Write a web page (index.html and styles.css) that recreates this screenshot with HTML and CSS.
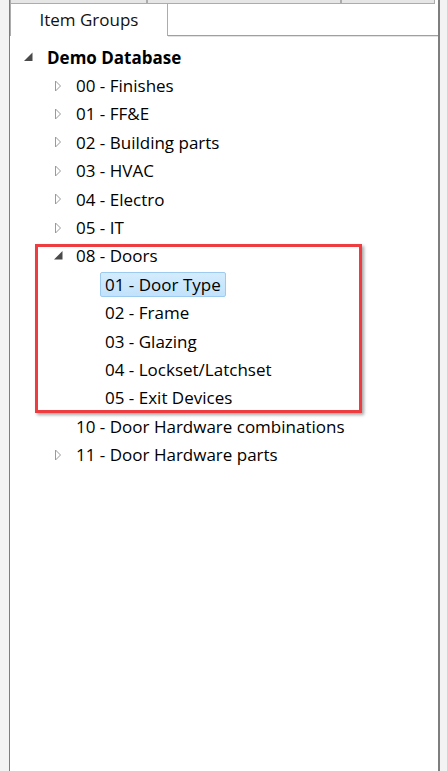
FILE: index.html
```html
<!DOCTYPE html>
<html>
<head>
<meta charset="utf-8">
<link rel="stylesheet" href="styles.css">
</head>
<body>
<div class="window">
  <div class="pane">
    <div class="back-tabs">
      <div class="back-tab t1"></div>
      <div class="back-tab t2"></div>
      <div class="back-tab t3"></div>
    </div>
    <div class="tab-row">
      <div class="tab active">Item Groups</div>
      <div class="tab-fill"></div>
    </div>
    <div class="tree">
      <div class="row l0"><span class="tog"><svg viewBox="0 0 12 12" width="12" height="12"><polygon class="exp" points="10.5,1.5 10.5,10 2,10"/></svg></span><span class="label bold">Demo Database</span></div>
      <div class="row l1"><span class="tog"><svg viewBox="0 0 12 12" width="12" height="12"><polygon class="col" points="4.5,1 9.5,6 4.5,11"/></svg></span><span class="label">00 - Finishes</span></div>
      <div class="row l1"><span class="tog"><svg viewBox="0 0 12 12" width="12" height="12"><polygon class="col" points="4.5,1 9.5,6 4.5,11"/></svg></span><span class="label">01 - FF&amp;E</span></div>
      <div class="row l1"><span class="tog"><svg viewBox="0 0 12 12" width="12" height="12"><polygon class="col" points="4.5,1 9.5,6 4.5,11"/></svg></span><span class="label">02 - Building parts</span></div>
      <div class="row l1"><span class="tog"><svg viewBox="0 0 12 12" width="12" height="12"><polygon class="col" points="4.5,1 9.5,6 4.5,11"/></svg></span><span class="label">03 - HVAC</span></div>
      <div class="row l1"><span class="tog"><svg viewBox="0 0 12 12" width="12" height="12"><polygon class="col" points="4.5,1 9.5,6 4.5,11"/></svg></span><span class="label">04 - Electro</span></div>
      <div class="row l1"><span class="tog"><svg viewBox="0 0 12 12" width="12" height="12"><polygon class="col" points="4.5,1 9.5,6 4.5,11"/></svg></span><span class="label">05 - IT</span></div>
      <div class="row l1"><span class="tog"><svg viewBox="0 0 12 12" width="12" height="12"><polygon class="exp" points="11.5,1 11.5,9.5 3,9.5"/></svg></span><span class="label">08 - Doors</span></div>
      <div class="row l2"><span class="tog"></span><span class="label selected">01 - Door Type</span></div>
      <div class="row l2"><span class="tog"></span><span class="label">02 - Frame</span></div>
      <div class="row l2"><span class="tog"></span><span class="label">03 - Glazing</span></div>
      <div class="row l2"><span class="tog"></span><span class="label">04 - Lockset/Latchset</span></div>
      <div class="row l2"><span class="tog"></span><span class="label">05 - Exit Devices</span></div>
      <div class="row l1"><span class="tog"></span><span class="label">10 - Door Hardware combinations</span></div>
      <div class="row l1"><span class="tog"><svg viewBox="0 0 12 12" width="12" height="12"><polygon class="col" points="4.5,1 9.5,6 4.5,11"/></svg></span><span class="label">11 - Door Hardware parts</span></div>
    </div>
    <div class="highlight"></div>
  </div>
</div>
</body>
</html>
```
FILE: styles.css
```css
html, body {
  margin: 0;
  padding: 0;
}
body {
  background: #f3f3f3;
  font-family: "Open Sans", "Noto Sans", sans-serif;
  font-size: 17px;
  color: #000;
  width: 447px;
  height: 771px;
  overflow: hidden;
}
.window {
  height: 771px;
  padding-left: 9px;
  padding-right: 6px;
  border-left: 1px solid #c8c8c8;
  box-sizing: border-box;
  width: 447px;
  margin-left: -1px;
}
.pane {
  position: relative;
  height: 771px;
  background: #fff;
  border-left: 1px solid #7e7e7e;
  border-right: 2px solid #7e7e7e;
  box-sizing: border-box;
  display: flex;
  flex-direction: column;
}
.back-tabs {
  display: flex;
  height: 4px;
  background: #fff;
}
.back-tab {
  height: 4px;
  background: #e6e6e6;
  border: 1px solid #acacac;
  border-top: none;
  box-sizing: border-box;
}
.t1 { width: 137px; }
.t2 { width: 194px; }
.t3 { width: 94px; }
.tab-row {
  display: flex;
  height: 33px;
  margin-top: -1px;
}
.tab {
  width: 158px;
  box-sizing: border-box;
  border: 1px solid #acacac;
  border-bottom: none;
  background: #fff;
  text-align: center;
  line-height: 32px;
  font-size: 17px;
  color: #111;
}
.tab-fill {
  flex: 1;
  border-bottom: 1px solid #a0a0a0;
  box-shadow: 0 1px 0 #e3e3e3;
}
.tree {
  padding-top: 7px;
  display: flex;
  flex-direction: column;
}
.row {
  height: 28.4px;
  display: flex;
  align-items: center;
  white-space: nowrap;
}
.l0 { padding-left: 12px; }
.l1 { padding-left: 41px; }
.l2 { padding-left: 70px; }
.tog {
  width: 20px;
  height: 12px;
  display: flex;
  align-items: center;
}
.tog svg { display: block; }
.l0 .tog svg { margin-top: -1px; }
.exp { fill: #4a4a4a; }
.col { fill: #fff; stroke: #9a9a9a; stroke-width: 1; }
.label {
  border: 1px solid transparent;
  padding: 0 4px;
  line-height: 23px;
  border-radius: 2px;
}
.bold { font-weight: 700; }
.selected {
  background: linear-gradient(#d4ecfd, #c2e2fb);
  border-color: #9ccbef;
}
.highlight {
  position: absolute;
  left: 25px;
  top: 244px;
  width: 327px;
  height: 169px;
  box-sizing: border-box;
  border: 3px solid #ee3d40;
  box-shadow: 2px 2px 3px rgba(0,0,0,0.35);
}
```
